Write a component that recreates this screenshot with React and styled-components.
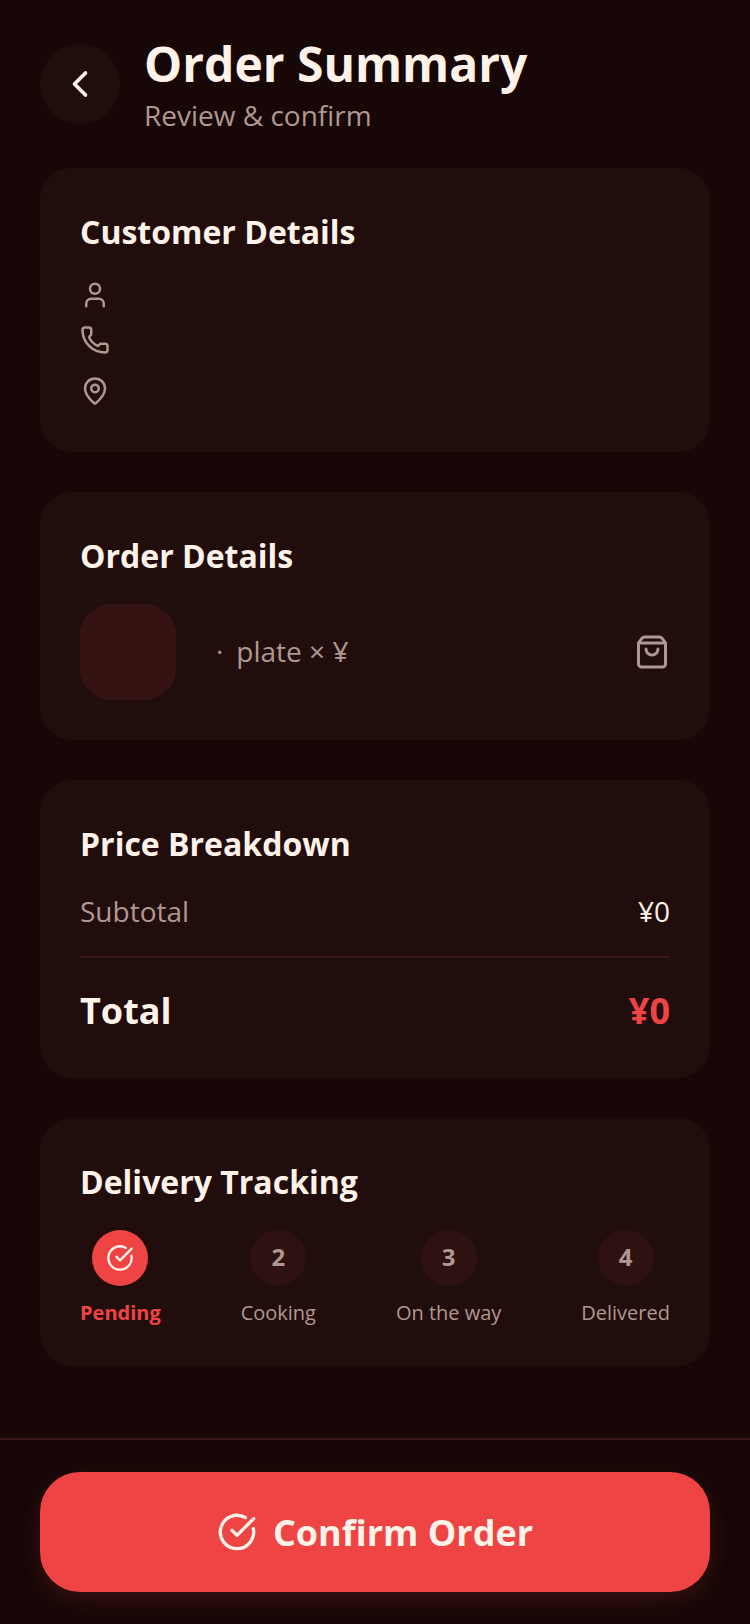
import React from "react";
import styled, { createGlobalStyle } from "styled-components";
import {
  ChevronLeft,
  User,
  Phone,
  MapPin,
  ShoppingBag,
  CircleCheckBig,
} from "lucide-react";

const GlobalStyle = createGlobalStyle`
  html, body {
    margin: 0;
    padding: 0;
    background: #170707;
  }
  * {
    box-sizing: border-box;
  }
`;

const Page = styled.div`
  width: 750px;
  height: 1624px;
  display: flex;
  flex-direction: column;
  background: #170707;
  color: #fff3e9;
  font-family: "Open Sans", "Noto Sans", sans-serif;
  overflow: hidden;
`;

const Header = styled.header`
  display: flex;
  align-items: center;
  gap: 24px;
  padding: 32px 40px 0;
`;

const BackButton = styled.button`
  width: 80px;
  height: 80px;
  display: flex;
  align-items: center;
  justify-content: center;
  border: none;
  border-radius: 50%;
  padding: 0;
  background: #220d0d;
  color: #fff3e9;
`;

const Heading = styled.div`
  display: flex;
  flex-direction: column;
  padding-bottom: 2px;
`;

const Title = styled.h1`
  margin: 0;
  font-size: 48px;
  line-height: 64px;
  font-weight: 700;
`;

const Subtitle = styled.div`
  font-size: 28px;
  line-height: 38px;
  color: #b09890;
`;

const Cards = styled.main`
  display: flex;
  flex-direction: column;
  gap: 40px;
  padding: 32px 40px 0;
`;

const Card = styled.section`
  display: flex;
  flex-direction: column;
  padding: 40px;
  border-radius: 32px;
  background: #220d0d;
`;

const CardTitle = styled.h2`
  margin: 0 0 24px;
  font-size: 32px;
  line-height: 48px;
  font-weight: 700;
`;

const InfoList = styled.div`
  display: flex;
  flex-direction: column;
  gap: 16px;
  color: #b09890;
`;

const InfoRow = styled.div`
  height: ${(p) => p.$h}px;
  display: flex;
  align-items: center;
`;

const OrderRow = styled.div`
  display: flex;
  align-items: center;
  gap: 40px;
`;

const Thumb = styled.div`
  width: 96px;
  height: 96px;
  flex: none;
  border-radius: 32px;
  background: #361313;
`;

const OrderText = styled.div`
  flex: 1;
  padding-bottom: 2px;
  font-size: 28px;
  line-height: 38px;
  color: #b09890;
`;

const OrderDot = styled.span`
  margin-right: 13px;
`;

const BagIcon = styled(ShoppingBag)`
  color: #b09890;
`;

const PriceRow = styled.div`
  display: flex;
  align-items: center;
  justify-content: space-between;
  padding-bottom: 2px;
  font-size: 28px;
  line-height: 38px;
  color: #b09890;
`;

const PriceValue = styled.span`
  color: #fff3e9;
`;

const Divider = styled.hr`
  height: 2px;
  margin: 24px 0;
  border: none;
  background: #3a1515;
`;

const TotalRow = styled.div`
  display: flex;
  align-items: center;
  justify-content: space-between;
  padding-top: 2px;
  font-size: 36px;
  line-height: 54px;
  font-weight: 700;
`;

const TotalValue = styled.span`
  color: #ef4444;
`;

const Steps = styled.div`
  display: flex;
  justify-content: space-between;
`;

const Step = styled.div`
  display: flex;
  flex-direction: column;
  align-items: center;
  gap: 14px;
`;

const StepDot = styled.div`
  width: 56px;
  height: 56px;
  display: flex;
  align-items: center;
  justify-content: center;
  padding-bottom: ${(p) => (p.$active ? 0 : 3)}px;
  border-radius: 50%;
  font-size: 24px;
  font-weight: 700;
  background: ${(p) => (p.$active ? "#ef4444" : "#2e1111")};
  color: ${(p) => (p.$active ? "#fff3e9" : "#b09890")};
`;

const StepLabel = styled.div`
  font-size: 20px;
  line-height: 26px;
  font-weight: ${(p) => (p.$active ? 700 : 400)};
  color: ${(p) => (p.$active ? "#ef4444" : "#b09890")};
`;

const Footer = styled.footer`
  margin-top: auto;
  padding: 32px 40px;
  border-top: 2px solid #3a1515;
`;

const ConfirmButton = styled.button`
  width: 100%;
  height: 120px;
  display: flex;
  align-items: center;
  justify-content: center;
  gap: 16px;
  border: none;
  border-radius: 40px;
  background: #ef4444;
  color: #fff3e9;
  font-family: inherit;
  font-size: 36px;
  font-weight: 700;
  box-shadow: 0 8px 24px rgba(239, 68, 68, 0.15);
`;

const steps = ["Pending", "Cooking", "On the way", "Delivered"];

export default function App() {
  return (
    <Page>
      <GlobalStyle />
      <Header>
        <BackButton aria-label="Back">
          <ChevronLeft size={44} strokeWidth={2} />
        </BackButton>
        <Heading>
          <Title>Order Summary</Title>
          <Subtitle>Review &amp; confirm</Subtitle>
        </Heading>
      </Header>
      <Cards>
        <Card>
          <CardTitle>Customer Details</CardTitle>
          <InfoList>
            <InfoRow $h={30}>
              <User size={30} strokeWidth={2} />
            </InfoRow>
            <InfoRow $h={28}>
              <Phone size={30} strokeWidth={2} />
            </InfoRow>
            <InfoRow $h={42}>
              <MapPin size={30} strokeWidth={2} />
            </InfoRow>
          </InfoList>
        </Card>
        <Card>
          <CardTitle>Order Details</CardTitle>
          <OrderRow>
            <Thumb />
            <OrderText>
              <OrderDot>·</OrderDot>plate × ¥
            </OrderText>
            <BagIcon size={36} strokeWidth={2} />
          </OrderRow>
        </Card>
        <Card>
          <CardTitle>Price Breakdown</CardTitle>
          <PriceRow>
            <span>Subtotal</span>
            <PriceValue>¥0</PriceValue>
          </PriceRow>
          <Divider />
          <TotalRow>
            <span>Total</span>
            <TotalValue>¥0</TotalValue>
          </TotalRow>
        </Card>
        <Card>
          <CardTitle>Delivery Tracking</CardTitle>
          <Steps>
            {steps.map((label, i) => (
              <Step key={label}>
                <StepDot $active={i === 0}>
                  {i === 0 ? <CircleCheckBig size={28} strokeWidth={2} /> : i + 1}
                </StepDot>
                <StepLabel $active={i === 0}>{label}</StepLabel>
              </Step>
            ))}
          </Steps>
        </Card>
      </Cards>
      <Footer>
        <ConfirmButton>
          <CircleCheckBig size={40} strokeWidth={2} />
          Confirm Order
        </ConfirmButton>
      </Footer>
    </Page>
  );
}
